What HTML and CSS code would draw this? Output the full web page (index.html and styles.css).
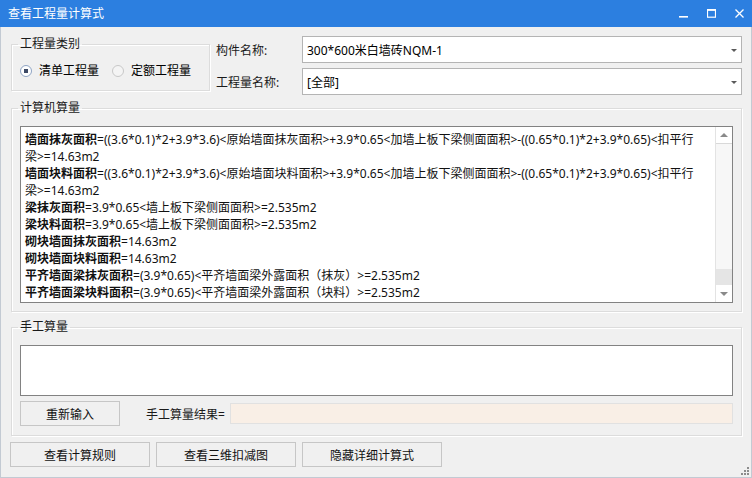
FILE: index.html
```
<!DOCTYPE html>
<html lang="zh-CN">
<head>
    <meta charset="UTF-8">
    <title>查看工程量计算式</title>
    <link rel="stylesheet" href="styles.css">
</head>
<body>
    <div class="window">
        <div class="titlebar">
            <span class="title">查看工程量计算式</span>
            <div class="controls">
                <svg class="ctl" width="9" height="9" viewBox="0 0 9 9"><rect x="0" y="7" width="9" height="1.6" fill="#fff"/></svg>
                <svg class="ctl" width="9" height="9" viewBox="0 0 9 9"><rect x="0.5" y="0.8" width="8" height="7.4" fill="none" stroke="#fff" stroke-width="1.2"/><rect x="0" y="0" width="9" height="1.8" fill="#fff"/></svg>
                <svg class="ctl" width="9" height="9" viewBox="0 0 9 9"><path d="M0.5 0.5 L8.5 8.5 M8.5 0.5 L0.5 8.5" stroke="#fff" stroke-width="1.3"/></svg>
            </div>
        </div>
        <div class="content">
            <div class="topRow">
                <fieldset class="group groupType">
                    <legend>工程量类别</legend>
                    <div class="radios">
                        <label class="radio checked"><span class="dot"></span>清单工程量</label>
                        <label class="radio"><span class="dot"></span>定额工程量</label>
                    </div>
                </fieldset>
                <div class="fields">
                    <div class="field">
                        <span class="fieldLabel">构件名称:</span>
                        <div class="combo"><span>300*600米白墙砖NQM-1</span><i class="arrow"></i></div>
                    </div>
                    <div class="field">
                        <span class="fieldLabel">工程量名称:</span>
                        <div class="combo"><span>[全部]</span><i class="arrow"></i></div>
                    </div>
                </div>
            </div>

            <fieldset class="group groupCalc">
                <legend>计算机算量</legend>
                <div class="textBox calcBox">
                    <div class="formula">
                        <b>墙面抹灰面积</b>=((3.6*0.1)*2+3.9*3.6)&lt;原始墙面抹灰面积&gt;+3.9*0.65&lt;加墙上板下梁侧面面积&gt;-((0.65*0.1)*2+3.9*0.65)&lt;扣平行<br>梁&gt;=14.63m2<br>
                        <b>墙面块料面积</b>=((3.6*0.1)*2+3.9*3.6)&lt;原始墙面块料面积&gt;+3.9*0.65&lt;加墙上板下梁侧面面积&gt;-((0.65*0.1)*2+3.9*0.65)&lt;扣平行<br>梁&gt;=14.63m2<br>
                        <b>梁抹灰面积</b>=3.9*0.65&lt;墙上板下梁侧面面积&gt;=2.535m2<br>
                        <b>梁块料面积</b>=3.9*0.65&lt;墙上板下梁侧面面积&gt;=2.535m2<br>
                        <b>砌块墙面抹灰面积</b>=14.63m2<br>
                        <b>砌块墙面块料面积</b>=14.63m2<br>
                        <b>平齐墙面梁抹灰面积</b>=(3.9*0.65)&lt;平齐墙面梁外露面积（抹灰）&gt;=2.535m2<br>
                        <b>平齐墙面梁块料面积</b>=(3.9*0.65)&lt;平齐墙面梁外露面积（块料）&gt;=2.535m2
                    </div>
                    <div class="scrollbar">
                        <span class="sbBtn"><i class="triUp"></i></span>
                        <span class="sbTrack"></span>
                        <span class="sbThumb"></span>
                        <span class="sbBtn"><i class="triDown"></i></span>
                    </div>
                </div>
            </fieldset>

            <fieldset class="group groupManual">
                <legend>手工算量</legend>
                <div class="textBox manualBox"></div>
                <div class="manualRow">
                    <span class="btn btnSmall">重新输入</span>
                    <span class="resultLabel">手工算量结果=</span>
                    <div class="resultField"></div>
                </div>
            </fieldset>

            <div class="bottomRow">
                <span class="btn">查看计算规则</span>
                <span class="btn">查看三维扣减图</span>
                <span class="btn">隐藏详细计算式</span>
                <svg class="grip" width="10" height="10" viewBox="0 0 10 10">
                    <rect x="7" y="1" width="2" height="2" fill="#8c8c8c"/>
                    <rect x="4" y="4" width="2" height="2" fill="#8c8c8c"/>
                    <rect x="7" y="4" width="2" height="2" fill="#8c8c8c"/>
                    <rect x="1" y="7" width="2" height="2" fill="#8c8c8c"/>
                    <rect x="4" y="7" width="2" height="2" fill="#8c8c8c"/>
                    <rect x="7" y="7" width="2" height="2" fill="#8c8c8c"/>
                </svg>
            </div>
        </div>
    </div>
</body>
</html>
```

FILE: styles.css
```
* {
    margin: 0;
    padding: 0;
    box-sizing: border-box;
}

body {
    font-family: "Noto Sans", "Noto Sans CJK SC", sans-serif;
    font-size: 12px;
    color: #000;
    background: #f0f0f0;
}

.window {
    width: 752px;
    height: 478px;
    display: flex;
    flex-direction: column;
    background: #f0f0f0;
}

.titlebar {
    height: 27px;
    flex: none;
    display: flex;
    align-items: center;
    justify-content: space-between;
    padding: 0 8px 0 8px;
    background: #2c7fe0;
    color: #fff;
}

.titlebar .title {
    font-size: 12px;
    line-height: 16px;
}

.controls {
    display: flex;
    align-items: center;
    gap: 19px;
}

.controls .ctl {
    display: block;
}

.content {
    flex: 1;
    position: relative;
    padding: 9px 9px 0 9px;
    border: 1px solid #c3cad3;
    border-top: none;
}

/* group boxes */
.group {
    border: 1px solid #dcdcdc;
    box-shadow: inset 1px 1px 0 #fff, 1px 1px 0 #fff;
    margin-left: 1px;
    min-width: 0;
}

.group legend {
    margin-left: -2px;
    padding: 0 2px;
    line-height: 16px;
    color: #1a1a1a;
}

.topRow {
    display: flex;
    align-items: flex-start;
}

.groupType {
    width: 199px;
    padding: 10px 0 11px 8px;
}

.radios {
    display: flex;
    align-items: center;
}

.radio {
    display: flex;
    align-items: center;
    line-height: 17px;
    margin-right: 13px;
}

.radio .dot {
    width: 12px;
    height: 12px;
    margin-right: 7px;
    border: 1px solid #c8c8c8;
    border-radius: 50%;
    background: #f4f4f4;
    display: flex;
    align-items: center;
    justify-content: center;
}

.radio.checked .dot {
    border-color: #8fa4c4;
    background: #fff;
}

.radio.checked .dot::after {
    content: "";
    width: 4px;
    height: 4px;
    background: #3d4a66;
}

.fields {
    flex: 1;
    margin-left: 6px;
    display: flex;
    flex-direction: column;
    gap: 5px;
}

.field {
    display: flex;
    align-items: center;
}

.fieldLabel {
    width: 86px;
    flex: none;
    color: #1a1a1a;
}

.combo {
    flex: 1;
    height: 27px;
    display: flex;
    align-items: center;
    justify-content: space-between;
    padding: 0 4px 0 4px;
    border: 1px solid #b4b4b4;
    background: #fff;
}

.combo .arrow {
    width: 0;
    height: 0;
    margin-top: 1px;
    border-left: 3px solid transparent;
    border-right: 3px solid transparent;
    border-top: 3px solid #5a5a5a;
}

/* text boxes */
.textBox {
    border: 1px solid #828282;
    background: #fff;
}

.groupCalc {
    margin-top: 5px;
    padding: 10px 8px 8px 8px;
}

.calcBox {
    height: 177px;
    display: flex;
    overflow: hidden;
}

.formula {
    flex: 1;
    padding: 4px 0 0 4px;
    line-height: 17px;
    white-space: nowrap;
    overflow: hidden;
    color: #111;
}

.formula b {
    font-weight: bold;
}

.scrollbar {
    width: 17px;
    flex: none;
    display: flex;
    flex-direction: column;
    background: #f7f7f7;
    border-left: 1px solid #e3e3e3;
}

.sbBtn {
    height: 17px;
    flex: none;
    display: flex;
    align-items: center;
    justify-content: center;
    background: #fff;
}

.sbBtn:first-child {
    border-bottom: 1px solid #d9d9d9;
}

.sbTrack {
    flex: 1;
}

.sbThumb {
    height: 16px;
    flex: none;
    background: #e5e5e5;
}

.triUp {
    width: 0;
    height: 0;
    border-left: 4px solid transparent;
    border-right: 4px solid transparent;
    border-bottom: 4px solid #8a8a8a;
}

.triDown {
    width: 0;
    height: 0;
    border-left: 4px solid transparent;
    border-right: 4px solid transparent;
    border-top: 4px solid #8a8a8a;
}

.groupManual {
    margin-top: 7px;
    padding: 10px 8px 9px 8px;
}

.manualBox {
    height: 51px;
}

.manualRow {
    margin-top: 5px;
    display: flex;
    align-items: center;
}

.btn {
    height: 25px;
    display: flex;
    align-items: center;
    justify-content: center;
    border: 1px solid #c6c6c6;
    background: #f0f0f0;
    color: #111;
}

.btnSmall {
    width: 100px;
}

.resultLabel {
    margin-left: 26px;
    margin-right: 5px;
    color: #1a1a1a;
}

.resultField {
    flex: 1;
    height: 21px;
    border: 1px solid #e1e1e1;
    background: #f9efe6;
}

.bottomRow {
    margin-top: 6px;
    display: flex;
    gap: 6px;
}

.bottomRow .btn {
    width: 140px;
}

.grip {
    position: absolute;
    right: 1px;
    bottom: 1px;
}
```
